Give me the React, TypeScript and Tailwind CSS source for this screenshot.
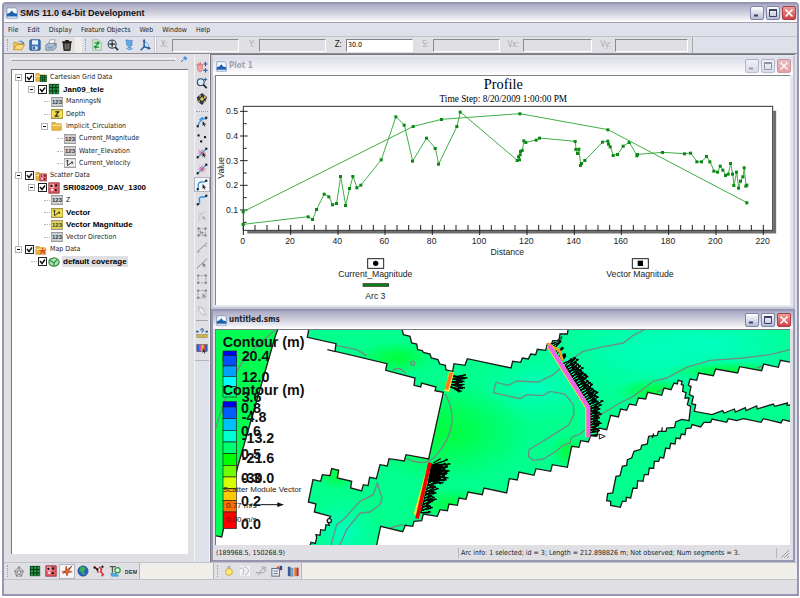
import { useState } from 'react';
import type { ReactNode } from 'react';

type Pt = [number, number];

const UI = "font-['DejaVu_Sans_Condensed','DejaVu_Sans',sans-serif]";
const SANS = "'Liberation Sans', Arial, sans-serif";
const SERIF = "'Liberation Serif', 'Times New Roman', serif";

const toPoints = (list: Pt[]) => list.map((p) => p.join(',')).join(' ');

/* ---------- ICONS (all on a 14x14 grid) ---------- */

const NodeDot = ({ x, y, c = '#111' }: { x: number; y: number; c?: string }) => (
  <rect x={x - 1.2} y={y - 1.2} width="2.4" height="2.4" fill={c} />
);
const Cursor = ({ c = '#222' }: { c?: string }) => (
  <path d="M7.5 5.5v6.5l1.6-1.4 1 2.2 1-.5-1-2.1h2z" fill={c} stroke="#fff" strokeWidth=".3" />
);
const GridBlock = () => (
  <>
    <rect x="1" y="1" width="12" height="12" fill="#0b3d17" />
    {[2, 6, 10].map((y) => [2, 6, 10].map((x) => <rect key={`${x}-${y}`} x={x} y={y} width="2.6" height="2.6" fill="#2f9a4c" />))}
  </>
);
const ScatterBlock = () => (
  <>
    <rect x="1" y="1" width="12" height="12" fill="#e8606a" stroke="#8d2a33" />
    <rect x="2" y="2" width="5" height="5" fill="#f7a9ae" />
    <NodeDot x={4} y={4.5} /><NodeDot x={9.5} y={4} /><NodeDot x={9} y={9.5} /><NodeDot x={5} y={9} c="#fff" />
  </>
);
const FolderShape = () => (
  <>
    <path d="M1 3h4l1 1.5h6V12H1z" fill="#e9b83f" stroke="#b98a22" strokeWidth=".7" />
    <path d="M1.5 5.5h10.5V7H1.5z" fill="#fbe49a" />
  </>
);

const ICONS: Record<string, ReactNode> = {
  open: <><path d="M1 12V4h4l1 1h5v2" fill="#f3cb62" stroke="#b98622" strokeWidth=".8" /><path d="M1 12.5l3-6h9.5l-3 6z" fill="#fbd978" stroke="#b98622" strokeWidth=".8" /><path d="M6 3.5c2-3 5-2 6 .5l1-1v3h-3l1-1C10 3 8.500 2.500 6 3.500z" fill="#4d8bbd" /></>,
  save: <><rect x="1" y="1" width="12" height="12" rx="1" fill="#3d79b8" stroke="#1f4d85" /><rect x="3.500" y="1.500" width="7" height="5" fill="#e6f1fb" /><rect x="4" y="8.500" width="6" height="4" fill="#dbe4ee" /><rect x="5" y="9" width="2" height="3" fill="#1f4d85" /></>,
  print: <><path d="M4 6l2-5h6l-2 5z" fill="#fff" stroke="#7c8796" strokeWidth=".8" /><path d="M1 7l3-2h9v5l-3 3H1z" fill="#b4bfce" stroke="#5d6b80" strokeWidth=".8" /><path d="M3 9h6v2H3z" fill="#6b9bd0" /><path d="M10 8l3-2" stroke="#5d6b80" /></>,
  trash: <><path d="M2.500 4h9l-1 9.500h-7z" fill="#3a3432" stroke="#1c1817" /><path d="M1.500 3.500h11M5 2h4" stroke="#1c1817" strokeWidth="1.500" /><path d="M5 5.500v6.500M7 5.500v6.500M9 5.500v6.500" stroke="#b9b1ac" strokeWidth=".7" /></>,
  refresh: <><path d="M2 1h7l3 3v9H2z" fill="#d3f0d4" stroke="#8aa38c" strokeWidth=".8" /><path d="M4 4.500h5L7.500 3M9.500 9.500h-5L6 11M9 5L4.500 9" stroke="#17913a" strokeWidth="1.700" fill="none" /></>,
  frame: <><circle cx="6" cy="6" r="4.700" fill="#e1ecf7" stroke="#3c4b5d" strokeWidth="1.300" /><path d="M9.500 9.500l3.500 3.500" stroke="#25303d" strokeWidth="2" /><path d="M6 2.500v7M2.500 6h7" stroke="#222" strokeWidth="1.400" /></>,
  display: <><path d="M3.500 1l7 1v6l-6-.5z" fill="#5aa9e8" stroke="#3b7fc0" strokeWidth=".7" /><path d="M6 8.500h3v2h-3z" fill="#4a8ac4" /><path d="M4 11l3-1 4 1-3 2z" fill="#8bc4f2" stroke="#4a8ac4" strokeWidth=".7" /><path d="M10 2.500l1.500-1" stroke="#d04bd0" /></>,
  axes: <><path d="M6 1v8l6 2M6 9l-4 4" stroke="#1c5b9c" strokeWidth="1.700" fill="none" /><path d="M4.300 3L6 0l1.700 3zM11 8.500l3 2.500-4 1.500z" fill="#1c5b9c" /><path d="M7 4c3 0 4 2 4 5" stroke="#58a1dc" fill="none" /></>,
  pan: <><path d="M2 8c0-2-1-3-1-4l2 1V2l1.500 3 .7-3.500.8 4 1.500-2v5c0 5-4 5-5.500 2z" fill="#f2a59e" stroke="#c65f62" strokeWidth=".7" /><path d="M11 1v5M8.500 3.500h5M8.500 11h5M11 8.500v5" stroke="#2b62ad" strokeWidth="1.400" /></>,
  zoom: <><circle cx="5.500" cy="6" r="4" fill="#d6eafa" stroke="#33465c" strokeWidth="1.200" /><path d="M8.500 9l4 4" stroke="#1d2935" strokeWidth="2" /><path d="M9 3h4M11 1v4" stroke="#2466b5" strokeWidth="1.200" /></>,
  rotate: <><path d="M7 0l6 5-2 5-4 4-5-4-1-5z" fill="#2b3b50" /><circle cx="7" cy="7" r="2" fill="#f2c84b" /><path d="M3 4l2-2 1 2zM9 3l3 2-2 2zM3 8l2 2-2 1zM8 11l2-2 1 2z" fill="#f2c84b" /></>,
  arc: <><path d="M2 12C4 5 7 3 12 2M4 5l3-3 5 2" stroke="#2f8fdd" strokeWidth="1.400" fill="none" /><NodeDot x={2} y={12} /><NodeDot x={12} y={2} /><Cursor /></>,
  points: <><NodeDot x={3} y={4} /><NodeDot x={10.500} y={6} /><NodeDot x={6} y={11} /></>,
  vertexSel: <><path d="M2 12L12 2" stroke="#3f9ce0" strokeWidth="1.400" /><path d="M3 4l8 6M7 3v8M3 7h8" stroke="#dd4a8b" /><NodeDot x={2} y={12} /><NodeDot x={12} y={2} /><Cursor /></>,
  vertex: <><path d="M2 12L12 2" stroke="#3f9ce0" strokeWidth="1.400" /><path d="M4 4l6 6M7 3v8M3 7h8" stroke="#dd4a8b" /><NodeDot x={2} y={12} /><NodeDot x={12} y={2} /></>,
  arcSel: <><path d="M2.500 12C3 8 1 4 6 3.500c3-.5 4 1 6-1.500" stroke="#2f8fdd" strokeWidth="1.500" fill="none" /><NodeDot x={2} y={12} /><NodeDot x={12} y={2} /><Cursor /></>,
  arcNew: <><path d="M2.500 12C7 11 1 4 6 3.500c3-.5 4 1 6-1.500" stroke="#2f8fdd" strokeWidth="1.700" fill="none" /><NodeDot x={2} y={12} /><NodeDot x={12} y={2} /></>,
  arcOff: <><path d="M2 12c4-1 1-7 5-8l5-2M3 6l3-3" stroke="#bcbcc2" fill="none" /><Cursor c="#aaaab0" /></>,
  polySel: <><path d="M3 3h8v8H3z" stroke="#8c8c92" strokeDasharray="1 1" fill="none" /><NodeDot x={3} y={3} c="#777" /><NodeDot x={11} y={3} c="#777" /><NodeDot x={3} y={11} c="#777" /><NodeDot x={11} y={11} c="#777" /><path d="M5 5v4l3-2v3" stroke="#777" fill="none" /></>,
  line: <><path d="M1 13L13 2" stroke="#7f7f85" /><path d="M2 13h3M10 6h3" stroke="#a3a3a9" /></>,
  lineSel: <><path d="M1 13L13 2" stroke="#7f7f85" /><Cursor c="#77777d" /></>,
  box: <><path d="M2.500 3h9v8.500h-9z" stroke="#97979d" strokeDasharray="2 1" fill="none" /><NodeDot x={2.500} y={3} c="#8a8a90" /><NodeDot x={11.500} y={3} c="#8a8a90" /><NodeDot x={2.500} y={11.500} c="#8a8a90" /><NodeDot x={11.500} y={11.500} c="#8a8a90" /></>,
  boxSel: <><path d="M2.500 3h9v8.500h-9z" stroke="#97979d" strokeDasharray="2 1" fill="none" /><NodeDot x={2.500} y={3} c="#8a8a90" /><NodeDot x={11.500} y={3} c="#8a8a90" /><NodeDot x={2.500} y={11.500} c="#8a8a90" /><Cursor c="#88888e" /></>,
  feather: <><path d="M2 3l4 8 6 2-5-8z" fill="#f1f1f3" stroke="#b6b6bc" /><path d="M1 9l4-6 8 4" stroke="#c9c9ce" fill="none" /></>,
  measure: <><path d="M0 5.500h3M11 5.500h3" stroke="#245b9f" strokeWidth="2" /><path d="M5.500 4c0-3 3.500-2 3 0-.3 1-1.500 1-1.500 2.500" stroke="#245b9f" strokeWidth="1.300" fill="none" /><rect x="1" y="9" width="12" height="3" fill="#d8b53a" stroke="#74715c" strokeWidth=".6" /></>,
  contour: <><rect x="1" y="2" width="12" height="8" fill="#2d65d2" stroke="#333" strokeWidth=".6" /><path d="M4 2h3l-1 8H4z" fill="#e049c8" /><path d="M7 2h2v8H6z" fill="#f0d030" /><path d="M9 2h2v8H9z" fill="#e04030" /><Cursor /></>,
  mesh: <path d="M2 7l5-5 5 5-2 6H4zM2 7h10M7 2L4 13M7 2l3 11M2 7l8 6M12 7l-8 6" stroke="#6d6d70" strokeWidth=".8" fill="#f3f3f3" />,
  grid: <GridBlock />,
  scatter: <ScatterBlock />,
  map: <><path d="M6 1l1.500 4.500L12 2 9 7l4 1-4.500 1L7 13 5.500 9 1 8l4-1z" fill="#e8622a" stroke="#a8380d" strokeWidth=".6" /><path d="M9 5l4-4M2 10l3-2" stroke="#333" /></>,
  globe: <><circle cx="7" cy="7" r="6" fill="#2a62c9" stroke="#16387c" strokeWidth=".6" /><path d="M4 2c3-1 5 0 6 2L8 7l1 4c-2 1-3 0-3-2L3 7z" fill="#38b24a" /></>,
  river: <><path d="M1 2l4 3 1 4M7 2l3 3-1 3 3 3-2 2" stroke="#da2f2f" strokeWidth="1.800" fill="none" /><NodeDot x={2} y={3} /><NodeDot x={5} y={5} /><NodeDot x={11} y={2} /></>,
  gis: <><path d="M1 2h7M4 2v7" stroke="#555" strokeWidth="1.500" /><circle cx="10" cy="6" r="3" fill="#dff5e0" stroke="#2a9b45" strokeWidth="1.500" /><path d="M2 10h7l2 3H3z" fill="#53b1e4" stroke="#2177ab" strokeWidth=".6" /></>,
  bulb: <><circle cx="7" cy="8" r="4" fill="#ffe873" stroke="#c8a52a" /><path d="M5.500 1h3v3h-3z" fill="#a9aab5" /></>,
  wave: <><rect x="1" y="1" width="12" height="12" fill="#f2f2f4" /><path d="M1 4c5-2 6 3 3 8M6 2c7 2 6 7 1 10" stroke="#aaaab0" fill="none" /></>,
  plane: <path d="M1 9h4l4-5 4 1-3 4H6l-2 3M8 2l5 1" stroke="#97979d" fill="none" />,
  props: <><rect x="1" y="4" width="9" height="9" fill="#e9eef6" stroke="#4e617c" /><path d="M3 7h5M3 10h5" stroke="#4e617c" /><path d="M6 3l4-2v5z" fill="#d2532e" /><rect x="10.500" y="1" width="2.500" height="5" fill="#2446b0" /></>,
  film: <><path d="M1 2h3v11H1z" fill="#3a5a9c" /><path d="M4 4h3v9H4z" fill="#7fb2e0" stroke="#345" strokeWidth=".5" /><path d="M7 6h2v7H7z" fill="#e9d46a" /><rect x="8.500" y="3" width="2.500" height="10" rx="1" fill="#e77a2c" /><rect x="11" y="3" width="2.500" height="10" rx="1" fill="#b52a2a" /></>,
  folder: <FolderShape />,
  folderGrid: <><FolderShape /><g transform="translate(5 4) scale(.68)"><GridBlock /></g></>,
  folderScatter: <><FolderShape /><g transform="translate(5 4) scale(.68)"><ScatterBlock /></g></>,
  folderMap: <><FolderShape /><path d="M9 3l1 4 4-1-3 3 2 4-4-3-4 3 2-4-3-2h4z" fill="#e2501c" /></>,
  vector: <><rect x="0" y="2" width="14" height="10" fill="#eee" stroke="#777" /><path d="M4 4v6M3 5l1-1.500L5 5M4 10l6-4M8 6h2v2" stroke="#222" fill="none" /></>,
  vectorOn: <><rect x="0" y="2" width="14" height="10" fill="#f3df52" stroke="#776a20" /><path d="M4 4v6M3 5l1-1.500L5 5M4 10l6-4M8 6h2v2" stroke="#222" fill="none" /></>,
  depth: <><rect x="0" y="2" width="14" height="10" fill="#f3df52" stroke="#776a20" /><path d="M5 4.500h4L5 9.500h4" stroke="#222" strokeWidth="1.300" fill="none" /></>,
  coverage: <><path d="M1 7c0-3 2-4 4-4 3-2 8 0 8 4s-3 4-5 5c-3 0-7-1-7-5z" fill="#a9e4b0" stroke="#26803a" strokeWidth="1.200" /><path d="M2 5l5 3 4-4M7 8v4" stroke="#26803a" strokeWidth="1.200" fill="none" /></>,
  app: <><path d="M1 1h10l2 2v10H1z" fill="#f6f9fd" stroke="#5a7fae" strokeWidth=".8" /><path d="M1 11V8l3-1 3-3 2 3 4 1v3z" fill="#1c62ad" /></>,
};

function Icon({ name, className = 'size-[13px]' }: { name: string; className?: string }) {
  const isNum = name === 'num' || name === 'numOn';
  return (
    <svg viewBox="0 0 14 14" className={`shrink-0 ${className}`} fill="none" aria-hidden="true">
      {isNum && <rect x="0" y="2" width="14" height="10" fill={name === 'numOn' ? '#ecd65a' : '#d5d5d8'} stroke="#777" />}
      {isNum && <text x="7" y="9.5" textAnchor="middle" fontSize="7" fontWeight="bold" fontFamily={SANS} fill="#333">123</text>}
      {name === 'dem' && <text x="7" y="10" textAnchor="middle" fontSize="7" fontWeight="bold" fontFamily={SANS} fill="#333">DEM</text>}
      {ICONS[name]}
    </svg>
  );
}

/* ---------- SHARED CHROME ---------- */

function ToolButton({ name, label, pressed = false }: { name: string; label: string; pressed?: boolean }) {
  return (
    <button type="button" aria-label={label} aria-pressed={pressed}
      className={`flex h-[15px] w-4 items-center justify-center ${pressed ? 'border border-[#b4b4be] bg-[#f6f6f9]' : ''}`}>
      <Icon name={name} className="size-3" />
    </button>
  );
}

const Grip = () => <div className="mx-[3px] h-3 w-px border-l border-dotted border-[#9c9ca6]" />;

function WindowButtons({ faded = false }: { faded?: boolean }) {
  const base = 'flex size-[14px] items-center justify-center rounded-[2px] border';
  return (
    <div className={`ml-auto flex gap-[2px] ${faded ? 'opacity-50' : ''}`}>
      <button type="button" aria-label="Minimize" className={`${base} border-[#8084a8] bg-linear-to-b from-white to-[#b8bcd4]`}>
        <svg viewBox="0 0 10 10" className="size-[10px]"><path d="M2 7.500h4" stroke="#3d4166" strokeWidth="2" /></svg>
      </button>
      <button type="button" aria-label="Maximize" className={`${base} border-[#8084a8] bg-linear-to-b from-white to-[#b8bcd4]`}>
        <svg viewBox="0 0 10 10" className="size-[10px]" fill="none"><path d="M1.500 2.500h7v6h-7z" stroke="#3d4166" /><path d="M1 2h8" stroke="#3d4166" strokeWidth="2" /></svg>
      </button>
      <button type="button" aria-label="Close" className={`${base} border-[#a8414c] bg-linear-to-b from-[#ec9a96] to-[#cf3f46]`}>
        <svg viewBox="0 0 10 10" className="size-[10px]"><path d="M1.500 1.500l7 7M8.500 1.500l-7 7" stroke="#fff" strokeWidth="1.600" /></svg>
      </button>
    </div>
  );
}

/* ---------- TOP BARS ---------- */

const FIELDS = [
  { id: 'X', labelWidth: 'w-[14px]', width: 'w-[67px]' },
  { id: 'Y', labelWidth: 'w-[20px]', width: 'w-[67px]' },
  { id: 'Z', labelWidth: 'w-[20px]', width: 'w-[67px]' },
  { id: 'S', labelWidth: 'w-[20px]', width: 'w-[67px]' },
  { id: 'Vx', labelWidth: 'w-[23px]', width: 'w-[69px]' },
  { id: 'Vy', labelWidth: 'w-[23px]', width: 'w-[73px]' },
];

function TopToolbar() {
  const [z, setZ] = useState('30.0');
  return (
    <div className="flex h-[17px] items-center border-t border-[#c2c2cb] bg-[#dfe1ea]">
      <div className="flex h-full items-center bg-[#e0dfe3]">
        <Grip />
        <ToolButton name="open" label="Open" />
        <ToolButton name="save" label="Save" />
        <ToolButton name="print" label="Print" />
        <ToolButton name="trash" label="Delete All" />
      </div>
      <div className="h-full w-[7px] bg-[#efeee8]" />
      <Grip />
      <ToolButton name="refresh" label="Refresh" />
      <ToolButton name="frame" label="Frame" />
      <ToolButton name="display" label="Display Options" />
      <ToolButton name="axes" label="Plot Axes" />
      <div className="ml-px h-full w-[3px] border-x border-[#c5c5cc] bg-white" />
      <div className="flex h-full items-center border-r border-[#a9a9b1] bg-[#e0dfe3] pr-1 pl-px">
        {FIELDS.map(({ id, labelWidth, width }) => (
          <div key={id} className="flex items-center">
            <label htmlFor={`coord-${id}`} className={`${labelWidth} pr-1 text-right text-[8px] leading-3 ${id === 'Z' ? 'text-[#222]' : 'text-[#aaaab0]'}`}>{id}:</label>
            {id === 'Z' ? (
              <input id="coord-Z" value={z} onChange={(e) => setZ(e.target.value)}
                className={`h-[13px] border border-[#80808a] border-r-white border-b-white bg-white px-px text-[7px] leading-[11px] text-black ${width}`} />
            ) : (
              <input id={`coord-${id}`} disabled
                className={`h-[13px] border border-[#8a8a92] border-r-white border-b-white bg-[#e0dfe3] ${width}`} />
            )}
          </div>
        ))}
      </div>
    </div>
  );
}

/* ---------- PROJECT TREE ---------- */

type Row = { label: string; icon: string; depth: number; node?: boolean; check?: boolean; bold?: boolean; selected?: boolean };

const TREE: Row[] = [
  { label: 'Cartesian Grid Data', icon: 'folderGrid', depth: 0, node: true, check: true },
  { label: 'Jan09_tele', icon: 'grid', depth: 1, node: true, check: true, bold: true },
  { label: 'ManningsN', icon: 'num', depth: 2 },
  { label: 'Depth', icon: 'depth', depth: 2 },
  { label: 'Implicit_Circulation', icon: 'folder', depth: 2, node: true },
  { label: 'Current_Magnitude', icon: 'num', depth: 3 },
  { label: 'Water_Elevation', icon: 'num', depth: 3 },
  { label: 'Current_Velocity', icon: 'vector', depth: 3 },
  { label: 'Scatter Data', icon: 'folderScatter', depth: 0, node: true, check: true },
  { label: 'SRI082009_DAV_1300', icon: 'scatter', depth: 1, node: true, check: true, bold: true },
  { label: 'Z', icon: 'num', depth: 2 },
  { label: 'Vector', icon: 'vectorOn', depth: 2, bold: true },
  { label: 'Vector Magnitude', icon: 'numOn', depth: 2, bold: true },
  { label: 'Vector Direction', icon: 'num', depth: 2 },
  { label: 'Map Data', icon: 'folderMap', depth: 0, node: true, check: true },
  { label: 'default coverage', icon: 'coverage', depth: 1, check: true, bold: true, selected: true },
];

const INDENT = ['pl-0', 'pl-[13px]', 'pl-[26px]', 'pl-[39px]'];

function TreeRow({ row }: { row: Row }) {
  const [on, setOn] = useState(true);
  const inputId = `tree-${row.label.replace(/\s/g, '-')}`;
  return (
    <li className={`flex min-h-0 items-center ${INDENT[row.depth]}`}>
      {row.node ? (
        <button type="button" aria-label={`Collapse ${row.label}`} className="mr-[3px] flex size-[7px] shrink-0 items-center justify-center border border-[#b4b4b4] bg-white">
          <span className="h-px w-[3px] bg-black" />
        </button>
      ) : (
        <span className="mr-px ml-[3px] w-[6px] shrink-0 border-t border-dotted border-[#b4b4b4]" />
      )}
      {row.check && (
        <span className="mr-px grid size-[9px] shrink-0">
          <input id={inputId} type="checkbox" checked={on} onChange={() => setOn(!on)}
            className="peer col-start-1 row-start-1 size-[9px] appearance-none border border-[#222] bg-white" />
          <svg viewBox="0 0 9 9" className="pointer-events-none invisible col-start-1 row-start-1 size-[9px] peer-checked:visible" fill="none">
            <path d="M2 4l2 2.500L7 2.500" stroke="#111" strokeWidth="1.400" />
          </svg>
        </span>
      )}
      <Icon name={row.icon} className="mr-[2px] size-3" />
      <label htmlFor={row.check ? inputId : undefined}
        className={`px-px leading-[11px] whitespace-nowrap ${row.bold ? "font-['Liberation_Sans',Arial,sans-serif] text-[8px] font-bold text-black" : 'text-[7px] text-[#222]'} ${row.selected ? 'bg-[#dedee3]' : ''}`}>
        {row.label}
      </label>
    </li>
  );
}

function ProjectTree() {
  return (
    <aside className="flex w-[190px] shrink-0 flex-col bg-[#e0dfe3] pr-[6px] pb-2 pl-[7px]">
      <div className="flex h-[15px] items-start gap-1 pt-px">
        <div className="mt-[3px] h-[3px] flex-1 border border-[#f6f6f8] border-b-[#a5a5ad]" />
        <svg viewBox="0 0 8 8" className="size-2"><path d="M1 7l2.500-2.500" stroke="#2b6fc4" /><path d="M3 3l2-2 2.500 2.500-2 2z" fill="#4692e0" /></svg>
      </div>
      <div className="flex-1 border-t border-l border-[#77777f] bg-white pt-px pl-[3px]">
        <ul className="grid h-[197px] auto-rows-fr bg-[linear-gradient(#c6c6c6,#c6c6c6)] bg-[length:1px_172px] bg-[position:3px_6px] bg-no-repeat">
          {TREE.map((row) => <TreeRow key={row.label} row={row} />)}
        </ul>
      </div>
    </aside>
  );
}

/* ---------- VERTICAL TOOLS ---------- */

function ToolPalette() {
  const tools = ['arc', 'points', 'vertexSel', 'vertex', 'arcSel', 'arcNew', 'arcOff', 'polySel', 'line', 'lineSel', 'box', 'boxSel', 'feather'];
  return (
    <div className="flex w-4 shrink-0 flex-col border-x border-[#f3f3f6] bg-[#dfe1ea]">
      <div className="flex flex-col items-center gap-px bg-[#e0dfe3] pt-[5px] pb-[3px]">
        <ToolButton name="pan" label="Pan" />
        <ToolButton name="zoom" label="Zoom" />
        <ToolButton name="rotate" label="Rotate" />
      </div>
      <div className="mx-px my-[2px] border-t border-dotted border-[#9c9ca6]" />
      <div className="grid h-[204px] auto-rows-fr items-center justify-center bg-[#e0dfe3]">
        {tools.map((t) => <ToolButton key={t} name={t} label={t} pressed={t === 'arcSel'} />)}
      </div>
      <div className="mx-px my-[2px] border-t border-[#a5a5ad]" />
      <div className="flex flex-col items-center gap-px border-b border-[#b5b5bd] bg-[#e0dfe3] pt-[2px] pb-1">
        <ToolButton name="measure" label="Measure" />
        <ToolButton name="contour" label="Contour Labels" />
      </div>
    </div>
  );
}

/* ---------- PROFILE PLOT (3 drawing units per pixel) ---------- */

const OBSERVED: Pt[] = [
  [100, 493], [295, 470], [308, 478], [320, 448], [343, 402], [357, 410], [368, 434], [380, 430], [392, 349], [407, 436],
  [419, 385], [429, 349], [441, 383], [453, 375], [514, 299], [558, 170], [583, 195], [608, 303], [650, 234], [676, 265],
  [686, 312], [741, 199], [751, 156], [922, 301], [929, 299], [926, 290], [931, 284], [932, 274], [937, 271], [942, 242],
  [948, 247], [979, 240], [989, 234], [1096, 244], [1098, 268], [1103, 280], [1107, 267], [1112, 316], [1115, 310], [1125, 301],
  [1178, 246], [1194, 243], [1196, 252], [1201, 260], [1210, 286], [1223, 283], [1240, 258], [1258, 247], [1281, 287], [1283, 283],
  [1358, 277], [1424, 281], [1442, 279], [1461, 305], [1475, 305], [1490, 289], [1500, 305], [1512, 333], [1523, 336], [1531, 318],
  [1539, 330], [1547, 346], [1555, 342], [1562, 310], [1568, 342], [1572, 376], [1580, 336], [1586, 384], [1592, 363], [1599, 350],
  [1603, 323], [1608, 378], [1611, 375],
];
const COMPUTED: Pt[] = [[100, 455], [610, 199], [695, 178], [930, 161], [1194, 209], [1611, 428]];

function ProfilePlot() {
  return (
    <svg viewBox="18 48 1722 687" className="block h-auto w-full" role="img" aria-label="Profile">
      <text x="880" y="86" textAnchor="middle" fontFamily={SERIF} fontSize="43">Profile</text>
      <text x="880" y="125" textAnchor="middle" fontFamily={SERIF} fontSize="28">Time Step: 8/20/2009 1:00:00 PM</text>
      <path d="M112 516h1582V152" stroke="#6e6e6e" strokeWidth="9" fill="none" />
      <rect x="100" y="139" width="1588" height="372" fill="#fff" stroke="#333" strokeWidth="3" />
      <g stroke="#222" strokeWidth="3">
        {Array.from({ length: 45 }, (_, i) => {
          const x = Math.round(100 + i * 35.45);
          return <path key={x} d={i % 4 === 0 ? `M${x} 495V525` : `M${x} 495V511`} />;
        })}
        {Array.from({ length: 10 }, (_, i) => {
          const y = 154 + i * 37;
          return <path key={y} d={i % 2 === 0 ? `M90 ${y}H113` : `M100 ${y}H110`} />;
        })}
      </g>
      <g fontFamily={SANS} fontSize="26" fill="#222">
        {[0, 20, 40, 60, 80, 100, 120, 140, 160, 180, 200, 220].map((v) => (
          <text key={v} x={Math.round(98 + v * 7.09)} y="552" textAnchor="middle">{v}</text>
        ))}
        {['0.5', '0.4', '0.3', '0.2', '0.1'].map((v, i) => (
          <text key={v} x="84" y={163 + i * 74} textAnchor="end">{v}</text>
        ))}
        <text x="892" y="586" textAnchor="middle">Distance</text>
        <text transform="translate(42 324) rotate(-90)" textAnchor="middle">Value</text>
        <text x="496" y="652" textAnchor="middle">Current_Magnitude</text>
        <text x="496" y="717" textAnchor="middle">Arc 3</text>
        <text x="1290" y="652" textAnchor="middle">Vector Magnitude</text>
      </g>
      {[OBSERVED, COMPUTED].map((series, i) => (
        <g key={i}>
          <polyline points={toPoints(series)} fill="none" stroke="#3cb043" strokeWidth="3" />
          {series.map(([x, y]) => <rect key={`${x}-${y}`} x={x - 5} y={y - 4} width="9" height="9" fill="#0a8a14" />)}
        </g>
      ))}
      <g stroke="#222" strokeWidth="3" fill="#fff">
        <rect x="473" y="596" width="48" height="29" />
        <rect x="1267" y="596" width="48" height="29" />
      </g>
      <circle cx="497" cy="610" r="8" />
      <rect x="1283" y="602" width="16" height="16" />
      <rect x="459" y="671" width="77" height="8" fill="#0c8016" stroke="#222" strokeWidth="2" />
    </svg>
  );
}

/* ---------- MAP VIEW (3 drawing units per pixel) ---------- */

const WEST_LAND: Pt[] = [
  [205, 60], [196, 84], [82, 480], [40, 665], [35, 687], [10, 682], [10, 720], [298, 720], [303, 703], [316, 706], [320, 690], [318, 680],
  [330, 682], [332, 665], [345, 667], [348, 650], [358, 652], [352, 638], [362, 625], [313, 612], [318, 588], [295, 582],
  [309, 515], [332, 520], [337, 500], [360, 503], [365, 482], [386, 487], [382, 510], [425, 520], [422, 540], [455, 549],
  [460, 530], [474, 533], [479, 508], [499, 512], [510, 470], [532, 474], [537, 452], [583, 459], [588, 440], [656, 453],
  [700, 253], [675, 248], [678, 237], [635, 225], [632, 237], [612, 232], [615, 210], [527, 187], [531, 167],
  [375, 130], [378, 107], [292, 88], [297, 60],
];
const NORTH_LAND: Pt[] = [
  [575, 60], [578, 70], [580, 80], [600, 85], [605, 105], [620, 108], [623, 125], [637, 128], [640, 133], [660, 138], [664, 150],
  [684, 155], [689, 168], [706, 172], [708, 186], [728, 190], [732, 167], [765, 172], [772, 152], [903, 180], [908, 160],
  [932, 163], [937, 150], [955, 153], [962, 138], [977, 140], [982, 124], [1007, 127], [1012, 108], [1024, 110], [1028, 98],
  [1047, 98], [1050, 78], [1072, 78], [1075, 60],
];
const SOUTH_LAND: Pt[] = [
  [498, 720], [512, 655], [578, 671], [586, 652], [608, 655], [612, 640], [635, 638], [640, 618], [682, 625], [690, 605],
  [712, 608], [717, 588], [742, 592], [747, 570], [768, 574], [774, 552], [817, 560], [822, 540], [890, 555], [898, 512],
  [922, 516], [927, 492], [972, 502], [978, 482], [1022, 490], [1027, 470], [1072, 478], [1085, 415], [1107, 418], [1112, 398],
  [1135, 402], [1142, 383], [1160, 385], [1167, 360], [1190, 365], [1202, 322], [1225, 327], [1232, 303], [1250, 307],
  [1258, 288], [1278, 292], [1285, 270], [1307, 273], [1313, 253], [1355, 262], [1362, 240], [1383, 245], [1392, 225],
  [1402, 228], [1404, 217], [1416, 220], [1414, 230], [1420, 232], [1418, 250], [1428, 254], [1425, 270], [1437, 270],
  [1432, 290], [1442, 295], [1437, 338], [1415, 334], [1397, 342], [1394, 358], [1370, 360], [1368, 370], [1345, 370],
  [1342, 382], [1316, 385], [1314, 395], [1312, 408], [1295, 412], [1292, 424], [1272, 430], [1265, 450], [1252, 455], [1250, 472],
  [1237, 475], [1230, 503], [1218, 505], [1208, 555], [1193, 557], [1190, 578], [1202, 580], [1202, 592], [1231, 598],
  [1237, 580], [1248, 580], [1249, 568], [1262, 570], [1269, 540], [1281, 541], [1283, 518], [1299, 520], [1303, 500],
  [1315, 500], [1318, 480], [1331, 481], [1333, 460], [1346, 460], [1350, 448], [1361, 450], [1367, 420], [1379, 422],
  [1382, 406], [1395, 408], [1398, 390], [1410, 392], [1414, 378], [1425, 380], [1428, 362], [1443, 360], [1446, 350],
  [1472, 357], [1482, 343], [1502, 343], [1506, 333], [1550, 343], [1555, 332], [1580, 338], [1600, 332], [1653, 343],
  [1660, 332], [1713, 345], [1718, 335], [1750, 342], [1750, 720],
];
const EAST_LAND: Pt[] = [
  [1435, 232], [1440, 213], [1460, 217], [1466, 195], [1510, 203], [1517, 183], [1583, 195], [1589, 176], [1655, 188],
  [1661, 168], [1705, 178], [1711, 157], [1750, 164], [1750, 290], [1731, 292], [1732, 285], [1694, 295], [1690, 288],
  [1642, 303], [1640, 294], [1608, 308], [1606, 299], [1576, 312], [1573, 303], [1542, 315], [1538, 308], [1506, 320],
  [1453, 310], [1457, 290], [1445, 288], [1450, 265], [1438, 260], [1443, 235],
];

// [start x, start y, end x, end y, count, length, angle]
const VECTOR_FANS: [number, number, number, number, number, number, number][] = [
  [1022, 108, 1070, 180, 10, 30, 30],
  [1066, 176, 1140, 300, 44, 44, 32],
  [1140, 300, 1136, 385, 26, 36, 20],
  [726, 200, 716, 240, 12, 46, -8],
  [664, 468, 655, 520, 28, 56, 2],
  [655, 520, 630, 618, 26, 38, 20],
];

const BANDS = ['#0000f0', '#0050ff', '#00a0ff', '#00ffff', '#00ff80'];
const LOWER_BANDS = ['#0000f0', '#0060ff', '#00c0ff', '#00ffd0', '#00ff70', '#00ff00', '#70ff00', '#d8ff00', '#ffc800', '#ff7000', '#ff0000'];

function Vectors() {
  return (
    <g stroke="#000" strokeWidth="3" fill="#000">
      {VECTOR_FANS.map(([x1, y1, x2, y2, n, len, angle], f) =>
        Array.from({ length: n }, (_, i) => {
          const t = i / n;
          const a = ((angle + ((i * 7) % 5) * 8 - 16) * Math.PI) / 180;
          const l = len * (0.6 + ((i * 13) % 7) / 14);
          const x = x1 + (x2 - x1) * t;
          const y = y1 + (y2 - y1) * t;
          const ex = Math.round(x + Math.cos(a) * l);
          const ey = Math.round(y - Math.sin(a) * l);
          return <path key={`${f}-${i}`} d={`M${Math.round(x)} ${Math.round(y)}L${ex} ${ey}l-7 -2v5z`} />;
        }),
      )}
    </g>
  );
}

function MapView() {
  return (
    <svg viewBox="18 66 1722 645" className="block h-auto w-full bg-white" role="img" aria-label="Contour map">
      <defs>
        <radialGradient id="shoal"><stop offset="0" stopColor="#00ff3c" /><stop offset=".35" stopColor="#00ff46" stopOpacity=".8" /><stop offset="1" stopColor="#00ff50" stopOpacity="0" /></radialGradient>
        <radialGradient id="deep"><stop offset="0" stopColor="#00ffc0" /><stop offset="1" stopColor="#00ffb0" stopOpacity="0" /></radialGradient>
      </defs>
      <rect x="18" y="66" width="1722" height="645" fill="#00ff8c" />
      <path d="M18 66H205L40 690H18z" fill="#00ff50" />
      <ellipse cx="1330" cy="130" rx="420" ry="200" fill="url(#deep)" />
      <ellipse cx="1500" cy="110" rx="360" ry="120" fill="url(#deep)" />
      <ellipse cx="980" cy="240" rx="200" ry="110" fill="url(#deep)" />
      <ellipse cx="400" cy="670" rx="110" ry="110" fill="url(#deep)" />
      <ellipse cx="700" cy="370" rx="260" ry="150" fill="url(#shoal)" />
      <ellipse cx="380" cy="500" rx="60" ry="46" fill="url(#shoal)" />
      <ellipse cx="560" cy="150" rx="120" ry="50" fill="url(#shoal)" />
      <ellipse cx="760" cy="590" rx="180" ry="50" fill="url(#shoal)" />
      <ellipse cx="1080" cy="430" rx="60" ry="50" fill="url(#shoal)" />
      <ellipse cx="1330" cy="250" rx="120" ry="40" fill="url(#shoal)" />
      <ellipse cx="1560" cy="190" rx="200" ry="30" fill="url(#shoal)" />

      <g fill="none" stroke="#6c8f84" strokeWidth="4">
        <path d="M858 223L895 232 920 219 985 222 1030 200 1075 160 1120 130 1170 118 1240 105 1270 82 1302 66" />
        <path d="M858 223L850 254 930 272 950 260 998 263 1020 250 1065 258 1090 290 1092 320 1075 352 1030 380 990 405 957 425 955 445 970 457 1000 453 1035 432 1060 412 1080 405 1085 388 1110 378 1140 355 1175 318 1230 285 1270 265 1330 220 1370 210 1430 178 1500 157 1600 150 1680 140 1740 125" />
        <path d="M363 711L380 650 400 635 450 580 490 560 502 525 516 570 510 590 480 612 450 615 410 665 390 711" />
        <path d="M706 258C735 310 740 370 680 440Q650 480 590 452" />
        <path d="M18 360Q60 210 100 160T196 66M378 112L440 125 470 143M548 187q20-14 38 8" />
        <path d="M540 660l35-10 25 8M1340 252l20-8M1640 180l20-6" />
        <circle cx="608" cy="166" r="6" />
      </g>

      <g fill="#fff" stroke="#1a1a1a" strokeWidth="4" strokeLinejoin="miter">
        {[WEST_LAND, NORTH_LAND, SOUTH_LAND, EAST_LAND].map((land, i) => <polygon key={i} points={toPoints(land)} />)}
        <path d="M352 125l25 6M1327 390l4-14M1355 370l2-12" />
        <circle cx="358" cy="638" r="6" />
      </g>

      <Vectors />

      {/* observation arcs */}
      <g fill="none">
        <path d="M1012 106l36 22 10 30" stroke="#ff9a20" strokeWidth="8" />
        <path d="M1016 112L1133 298V388" stroke="#e8e84a" strokeWidth="15" />
        <path d="M1017 112L1135 298V388" stroke="#f060e8" strokeWidth="12" />
        <path d="M725 192L710 250" stroke="#ffd83a" strokeWidth="15" />
        <path d="M724 194L709 244" stroke="#ff7a20" strokeWidth="10" />
        <path d="M655 480L615 620" stroke="#e3f03a" strokeWidth="9" />
        <path d="M660 464L621 632" stroke="#f00000" strokeWidth="11" />
        <path d="M1168 378l18 7-18 8zM1040 98l16-12-6 16z" stroke="#222" strokeWidth="3" />
        <path d="M670 465l22-13" stroke="#111" strokeWidth="4" />
      </g>

      {/* legends */}
      <g stroke="#222" strokeWidth="2">
        {BANDS.map((c, i) => <rect key={c} x="39" y={i === 0 ? 129 : 112 + i * 31} width="40" height="31" fill={c} />)}
        {LOWER_BANDS.map((c, i) => <rect key={c} x="39" y={i === 0 ? 281 : 262 + i * 35} width="40" height={i === 10 ? 50 : 35} fill={c} />)}
      </g>
      <g fontFamily={SANS} fontWeight="bold" fontSize="43" fill="#111">
        <text x="38" y="116">Contour (m)</text>
        <text x="38" y="260">Contour (m)</text>
        {['20.4', '12.0', '3.6', '-4.8', '-13.2', '-21.6', '-30.0'].map((v, i) => <text key={v} x="95" y={160 + i * 61}>{v}</text>)}
        {['0.8', '0.6', '0.5', '0.3', '0.2', '0.0'].map((v, i) => <text key={v} x="93" y={314 + i * 70}>{v}</text>)}
      </g>
      <g fontFamily={SANS} fontSize="24" fill="#222">
        <text x="38" y="553">Scatter Module Vector</text>
        <text x="48" y="599">0.77 m/s</text>
        <text x="48" y="641">0.00 m/s</text>
      </g>
      <path d="M152 590h52" stroke="#111" strokeWidth="3" />
      <path d="M222 590l-20-7v14z" fill="#111" />
    </svg>
  );
}

/* ---------- APP ---------- */

export default function App() {
  return (
    <div className={`flex min-h-screen bg-white py-[2px] pr-px pl-[2px] ${UI}`}>
      <div className="flex min-w-0 flex-1 flex-col rounded-t-[4px] border-2 border-[#9696b2] bg-[#e0dfe3]">
        {/* TITLE BAR */}
        <header className="flex h-[19px] items-center gap-[2px] border-b border-[#a0a0b0] bg-linear-to-b from-[#a9a9c4] via-[#d0d0de] to-white pr-px pl-[2px]">
          <Icon name="app" className="size-3" />
          <h1 className="font-['Liberation_Sans',Arial,sans-serif] text-[9px] leading-3 font-bold whitespace-nowrap text-[#111]">SMS 11.0 64-bit Development</h1>
          <WindowButtons />
        </header>

        {/* MENU */}
        <nav className="flex h-[13px] items-center gap-[9px] bg-[#dfe1ea] pl-1 text-[7px] leading-3 text-[#222]">
          {['File', 'Edit', 'Display', 'Feature Objects', 'Web', 'Window', 'Help'].map((m) => (
            <button key={m} type="button" className="whitespace-nowrap">{m}</button>
          ))}
        </nav>
        <TopToolbar />

        {/* WORKSPACE */}
        <div className="flex min-h-0 flex-1 border-t border-[#8c8c94]">
          <ProjectTree />
          <ToolPalette />
          <main className="mr-[2px] flex min-w-0 flex-1 flex-col border-t border-l border-[#77777f]">
            <section className="flex flex-col border-2 border-[#c6c6d6] border-t-[#e4e4ec] bg-[#e6e6ee] pb-[2px]">
              <div className="flex h-[18px] items-center gap-[2px] bg-linear-to-b from-[#dcdce8] to-white pr-[2px] pl-[3px]">
                <Icon name="app" className="size-[11px]" />
                <h2 className="text-[8px] leading-3 font-bold text-[#a3a3ad]">Plot 1</h2>
                <WindowButtons faded />
              </div>
              <div className="mr-[3px] ml-[2px] border-t border-l border-[#85858d] bg-white"><ProfilePlot /></div>
            </section>
            <section className="flex flex-1 flex-col border-2 border-[#9696b2] bg-[#e0dfe3]">
              <div className="flex h-[18px] items-center gap-[2px] bg-linear-to-b from-[#a9a9c4] via-[#d0d0de] to-white pr-[2px] pl-[3px]">
                <Icon name="app" className="size-[11px]" />
                <h2 className="text-[8px] leading-3 font-bold text-[#222]">untitled.sms</h2>
                <WindowButtons />
              </div>
              <div className="mr-[3px] ml-[2px] border-t border-l border-[#77777f]"><MapView /></div>
              <footer className="flex flex-1 items-center pr-[2px] pl-[3px] text-[7px] leading-[10px] whitespace-nowrap text-[#222]">
                <span className="w-[243px] border-r border-[#b5b5bd]">(189968.5, 150268.9)</span>
                <span className="flex-1 border-r border-[#b5b5bd] pl-[2px]">Arc info: 1 selected; id = 3; Length = 212.898826 m; Not observed; Num segments = 3.</span>
                <svg viewBox="0 0 14 10" className="h-[10px] w-[14px]"><path d="M4 10l8-8M7 10l5-5M10 10l2-2" stroke="#9a9aa4" /></svg>
              </footer>
            </section>
          </main>
        </div>

        {/* MODULE BAR */}
        <div className="flex h-[18px] items-center border-y border-[#c2c2cb] bg-[#efeee8]">
          <div className="flex h-full items-center border-r border-[#b5b5bd] bg-[#e0dfe3]">
            <Grip />
            <ToolButton name="mesh" label="Mesh Module" />
            <ToolButton name="grid" label="Cartesian Grid Module" />
            <ToolButton name="scatter" label="Scatter Module" />
            <ToolButton name="map" label="Map Module" pressed />
            <ToolButton name="globe" label="GIS Module" />
            <ToolButton name="river" label="River Module" />
            <ToolButton name="gis" label="Particle Module" />
            <ToolButton name="dem" label="DEM Module" />
          </div>
          <div className="w-[73px]" />
          <div className="flex h-full items-center border-x border-[#b5b5bd] bg-[#e0dfe3]">
            <Grip />
            <ToolButton name="bulb" label="Lighting" />
            <ToolButton name="wave" label="Contours" />
            <ToolButton name="plane" label="Flow Trace" />
            <ToolButton name="props" label="Properties" />
            <ToolButton name="film" label="Film Loop" />
          </div>
        </div>
        <div className="h-[14px] bg-[#e0dfe3]" />
      </div>
    </div>
  );
}
